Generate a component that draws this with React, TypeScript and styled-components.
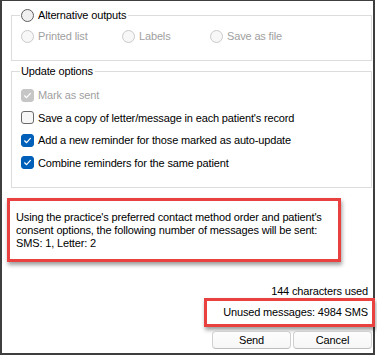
import styled, { createGlobalStyle } from "styled-components";

const GlobalStyle = createGlobalStyle`
  html, body {
    margin: 0;
    padding: 0;
    background: #ffffff;
  }
  body {
    font-family: "Liberation Sans", Arial, sans-serif;
    font-size: 11px;
    letter-spacing: -0.15px;
    color: #000000;
  }
`;

const Check = () => (
  <svg width="9" height="9" viewBox="0 0 9 9">
    <polyline
      points="1.6,4.8 3.6,6.7 7.4,2.4"
      fill="none"
      stroke="#ffffff"
      strokeWidth="1.2"
      strokeLinecap="round"
      strokeLinejoin="round"
    />
  </svg>
);

const App = () => {
  return (
    <>
      <GlobalStyle />
      <Window>
        <Group>
          <Legend>
            <Option>
              <Radio />
              <Label>Alternative outputs</Label>
            </Option>
          </Legend>
          <RadioRow>
            <Option>
              <Radio $disabled />
              <Label $disabled>Printed list</Label>
            </Option>
            <Option>
              <Radio $disabled />
              <Label $disabled>Labels</Label>
            </Option>
            <Option>
              <Radio $disabled />
              <Label $disabled>Save as file</Label>
            </Option>
          </RadioRow>
        </Group>

        <Group $update>
          <Legend>Update options</Legend>
          <CheckList>
            <Option>
              <Box $checked $disabled>
                <Check />
              </Box>
              <Label $disabled>Mark as sent</Label>
            </Option>
            <Option>
              <Box />
              <Label>Save a copy of letter/message in each patient's record</Label>
            </Option>
            <Option>
              <Box $checked>
                <Check />
              </Box>
              <Label>Add a new reminder for those marked as auto-update</Label>
            </Option>
            <Option>
              <Box $checked>
                <Check />
              </Box>
              <Label>Combine reminders for the same patient</Label>
            </Option>
          </CheckList>
        </Group>

        <Notice>
          Using the practice's preferred contact method order and patient's
          <br />
          consent options, the following number of messages will be sent:
          <br />
          SMS: 1, Letter: 2
        </Notice>

        <Counter>144 characters used</Counter>
        <Unused>Unused messages: 4984 SMS</Unused>

        <Buttons>
          <Button>Send</Button>
          <Button>Cancel</Button>
        </Buttons>
      </Window>
    </>
  );
};

export default App;

const Window = styled.div`
  box-sizing: border-box;
  width: 375px;
  height: 355px;
  display: flex;
  flex-direction: column;
  border: 2px solid #3e3e3e;
  border-top-width: 1px;
  padding: 7px 1px 4px 5px;
  background: #ffffff;
`;

const Group = styled.fieldset<{ $update?: boolean }>`
  box-sizing: border-box;
  width: 361px;
  margin: ${(p) => (p.$update ? "3px" : "0")} 0 0 4px;
  padding: ${(p) => (p.$update ? "10px 8px 17px 8px" : "7px 8px 17px 8px")};
  border: 1px solid #dcdcdc;
  min-width: 0;
`;

const Legend = styled.legend`
  padding: 0 2px 0 1px;
  height: 14px;
  line-height: 14px;
  color: #000000;
`;

const Option = styled.label`
  display: flex;
  align-items: center;
  gap: 4px;
  height: 14px;
  line-height: 14px;
  white-space: nowrap;
`;

const Label = styled.span<{ $disabled?: boolean }>`
  color: ${(p) => (p.$disabled ? "#9f9f9f" : "#000000")};
`;

const Radio = styled.span<{ $disabled?: boolean }>`
  box-sizing: border-box;
  width: 13px;
  height: 13px;
  flex: none;
  border-radius: 50%;
  border: 1px solid ${(p) => (p.$disabled ? "#c9c9c9" : "#5e5e5e")};
  background: ${(p) => (p.$disabled ? "#f7f7f7" : "#f0f0f0")};
`;

const RadioRow = styled.div`
  display: grid;
  grid-template-columns: 101px 88px auto;
  padding-left: 1px;
`;

const CheckList = styled.div`
  display: flex;
  flex-direction: column;
  gap: 8.5px;
  padding-left: 1px;
`;

const Box = styled.span<{ $checked?: boolean; $disabled?: boolean }>`
  box-sizing: border-box;
  width: 13px;
  height: 13px;
  flex: none;
  display: flex;
  align-items: center;
  justify-content: center;
  border-radius: 3px;
  border: 1px solid
    ${(p) =>
      p.$checked ? (p.$disabled ? "#c6c6c6" : "#005fb8") : "#6a6a6a"};
  background: ${(p) =>
    p.$checked ? (p.$disabled ? "#c6c6c6" : "#005fb8") : "#f7f7f7"};
`;

const Notice = styled.div`
  box-sizing: border-box;
  width: 334px;
  margin-top: 10px;
  padding: 10px 6px 9px;
  border: 3px solid #e8413f;
  line-height: 13px;
  color: #000000;
  box-shadow: 1px 3px 4px rgba(0, 0, 0, 0.38);
  white-space: nowrap;
`;

const Counter = styled.div`
  margin-top: 23.5px;
  padding-right: 4px;
  text-align: right;
  line-height: 13px;
`;

const Unused = styled.div`
  box-sizing: border-box;
  align-self: flex-end;
  width: 171px;
  margin-right: -3px;
  padding: 5px 4px;
  border: 3px solid #e8413f;
  text-align: right;
  line-height: 13px;
  box-shadow: 1px 3px 4px rgba(0, 0, 0, 0.38);
`;

const Buttons = styled.div`
  display: flex;
  justify-content: flex-end;
  gap: 2px;
  margin-top: 3.5px;
`;

const Button = styled.button`
  box-sizing: border-box;
  width: 79px;
  height: 18px;
  padding: 0;
  font-family: inherit;
  font-size: 11px;
  letter-spacing: -0.15px;
  color: #000000;
  border: 1px solid #d0d0d0;
  border-bottom-color: #bdbdbd;
  border-radius: 4px;
  background: linear-gradient(#fdfdfd, #f6f6f6);
  cursor: pointer;
`;
